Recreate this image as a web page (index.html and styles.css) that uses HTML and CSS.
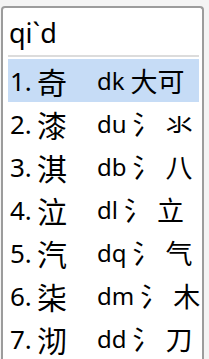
FILE: index.html
```html
<html>
  <head>
    <title>IME candidates</title>
    <link rel="stylesheet" href="styles.css">
  </head>
  <body>
    <div class="ime">
      <div class="input">qi`d</div>
      <div class="divider"></div>
      <div class="list">
        <div class="row active">
          <span class="num">1.</span><span class="char">奇</span><span class="code">dk</span><span class="parts">大可</span>
        </div>
        <div class="row">
          <span class="num">2.</span><span class="char">漆</span><span class="code">du</span><span class="parts">氵 氺</span>
        </div>
        <div class="row">
          <span class="num">3.</span><span class="char">淇</span><span class="code">db</span><span class="parts">氵 八</span>
        </div>
        <div class="row">
          <span class="num">4.</span><span class="char">泣</span><span class="code">dl</span><span class="parts">氵 立</span>
        </div>
        <div class="row">
          <span class="num">5.</span><span class="char">汽</span><span class="code">dq</span><span class="parts">氵 气</span>
        </div>
        <div class="row">
          <span class="num">6.</span><span class="char">柒</span><span class="code">dm</span><span class="parts">氵 木</span>
        </div>
        <div class="row">
          <span class="num">7.</span><span class="char">沏</span><span class="code">dd</span><span class="parts">氵 刀</span>
        </div>
      </div>
    </div>
  </body>
</html>
```

FILE: styles.css
```css
body {
  margin: 0;
  height: 359px;
  background-color: #f4f4f4;
  font-family: "Noto Sans", "Noto Sans CJK SC", sans-serif;
  color: #000000;
  overflow: hidden;
}
/* candidate window */
.ime {
  margin: 6px 0 0 1px;
  width: 199px;
  height: 353px;
  overflow: hidden;
  background-color: #ffffff;
  border: 2px solid #9c9c9c;
  border-bottom: none;
  border-radius: 4px 4px 0 0;
  box-sizing: content-box;
}
.ime .input {
  height: 47px;
  padding-left: 6px;
  font-size: 27px;
  line-height: 50px;
}
.ime .divider {
  margin: 0 3px 0 5px;
  border-top: 2px solid #dcdcdc;
}
.ime .list {
  padding: 2px 3px 0 5px;
}
.ime .row {
  display: flex;
  align-items: center;
  height: 43px;
  white-space: nowrap;
  font-family: "Noto Sans CJK SC", sans-serif;
}
.ime .row.active {
  background-color: #c6dcf6;
}
.ime .row span {
  flex-shrink: 0;
}
.ime .row .num {
  width: 27px;
  padding-left: 2px;
  font-family: "Noto Sans", sans-serif;
  font-size: 26px;
}
.ime .row .char {
  width: 60px;
  font-size: 30px;
}
.ime .row .code {
  font-family: "Noto Sans", sans-serif;
  font-size: 24px;
}
.ime .row .parts {
  margin-left: 6px;
  font-size: 27px;
}
```
